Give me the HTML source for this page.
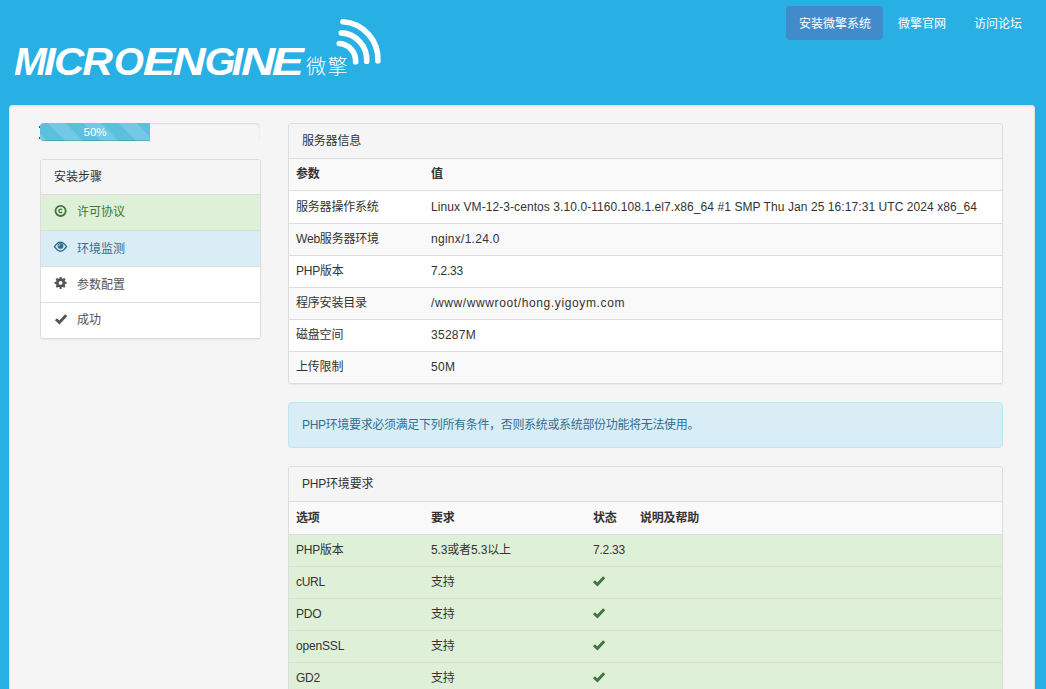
<!DOCTYPE html>
<html lang="zh-cn">
<head>
<meta charset="utf-8">
<title>安装系统 - 微擎 - 公众平台自助开源引擎</title>
<style>
*{box-sizing:border-box;}
html,body{margin:0;padding:0;}
body{width:1046px;height:689px;overflow:hidden;background:#28b0e4;color:#333;
  font-family:"Liberation Sans","Noto Sans CJK SC",sans-serif;font-size:12px;line-height:20px;position:relative;}
a{text-decoration:none;color:inherit;}
ul{list-style:none;margin:0;padding:0;}

/* header */
.header{position:absolute;left:0;top:0;width:1046px;height:105px;}
.logo{position:absolute;left:0;top:0;width:400px;height:105px;}
.nav li{position:absolute;top:6px;height:34px;}
.nav a{display:block;height:34px;line-height:36px;padding:0 13px;color:#fff;border-radius:4px;font-size:12px;white-space:nowrap;}
.nav li.active a{background:#428bca;width:97px;}

/* well */
.well{position:absolute;left:9px;top:105px;width:1026px;height:620px;background:#f5f5f5;border:1px solid #e3e3e3;border-radius:3px;box-shadow:inset 0 1px 1px rgba(0,0,0,.05);}

/* sidebar */
.progress{position:absolute;left:40px;top:123px;width:220px;height:18px;background:#f5f5f5;border-radius:4px;
  box-shadow:inset 0 1px 2px rgba(0,0,0,.1);overflow:hidden;}
.progress-bar{width:110px;height:18px;background-color:#5bc0de;color:#fff;text-align:center;font-size:11.5px;line-height:18px;
  background-image:linear-gradient(45deg,rgba(255,255,255,.15) 25%,transparent 25%,transparent 50%,rgba(255,255,255,.15) 50%,rgba(255,255,255,.15) 75%,transparent 75%,transparent);
  background-size:35.5px 35.5px;background-position:8px 0;box-shadow:inset 0 -1px 0 rgba(0,0,0,.15);}
.dot{position:absolute;left:38.8px;width:1.4px;height:2.2px;background:#333;border-radius:.5px;}
.panel{position:absolute;background:#fff;border:1px solid #ddd;border-radius:3px;box-shadow:0 1px 1px rgba(0,0,0,.05);overflow:hidden;}
.panel-heading{background:#f5f5f5;border-bottom:1px solid #ddd;padding:0 13px;color:#333;}
.side{left:40px;top:159px;width:221px;}
.side .panel-heading{height:35px;line-height:34px;}
.side li{height:36px;line-height:34px;border-top:1px solid #ddd;padding-left:13px;background:#fff;color:#555;position:relative;}
.side li:first-child{border-top:0;height:35px;line-height:35px;}
.side li:nth-child(2),.side li:nth-child(3){line-height:36px;}
.side li.ok{background:#dff0d8;color:#3c763d;}
.side li.cur{background:#d9edf7;color:#31708f;}
.side li svg{position:absolute;left:13px;top:10px;width:14px;height:14px;overflow:visible;}
.side li span{position:absolute;left:36px;top:0;}

/* main */
.main{left:288px;width:715px;}
.main .panel-heading{height:35px;line-height:34px;}
table{border-collapse:separate;border-spacing:0;width:100%;table-layout:fixed;}
th,td{text-align:left;padding:0 7px;height:32px;line-height:20px;border-top:1px solid #ddd;font-size:12px;vertical-align:top;padding-top:5px;white-space:nowrap;}
th{font-weight:bold;color:#333;}
thead tr{background:#f9f9f9;}
.main td,.main th,.main .panel-heading{letter-spacing:-0.2px;}
thead th{border-top:0;height:31px;padding-top:5px;}
tbody tr.h33 td{height:33px;padding-top:6px;}
thead.t32 th{height:32px;padding-top:6px;}
.striped tbody tr:nth-child(odd){background:#fff;}
.striped tbody tr:nth-child(even){background:#f9f9f9;}
tr.success td{background:#dff0d8;}
.alert{position:absolute;left:288px;top:402px;width:715px;height:46px;background:#d9edf7;border:1px solid #bce8f1;border-radius:4px;color:#31708f;padding:0 13px;line-height:44px;letter-spacing:-0.33px;}
.chk{width:14px;height:12px;display:block;position:relative;left:-1px;top:3px;}
</style>
</head>
<body>

<div class="header">
  <svg class="logo" viewBox="0 0 400 105">
    <text id="lg" y="75" font-family="Liberation Sans, sans-serif" font-size="39" font-weight="bold" font-style="italic" fill="#fff"><tspan x="13.9" textLength="32.8" lengthAdjust="spacingAndGlyphs">M</tspan><tspan x="44.1" textLength="11.8" lengthAdjust="spacingAndGlyphs">I</tspan><tspan x="54.0" textLength="30.2" lengthAdjust="spacingAndGlyphs">C</tspan><tspan x="82.3" textLength="30.7" lengthAdjust="spacingAndGlyphs">R</tspan><tspan x="113.7" textLength="30.2" lengthAdjust="spacingAndGlyphs">O</tspan><tspan x="142.8" textLength="32.6" lengthAdjust="spacingAndGlyphs">E</tspan><tspan x="172.5" textLength="33.2" lengthAdjust="spacingAndGlyphs">N</tspan><tspan x="204.5" textLength="31.0" lengthAdjust="spacingAndGlyphs">G</tspan><tspan x="231.8" textLength="11.4" lengthAdjust="spacingAndGlyphs">I</tspan><tspan x="240.9" textLength="34.3" lengthAdjust="spacingAndGlyphs">N</tspan><tspan x="271.7" textLength="32.1" lengthAdjust="spacingAndGlyphs">E</tspan></text>
    <text x="306" y="73.6" font-family="Noto Sans CJK SC, sans-serif" font-weight="300" font-size="20" fill="#fff" letter-spacing="1.5">微擎</text>
    <g fill="none" stroke="#fff" stroke-width="5.6" stroke-linecap="round">
      <path d="M342.9 21.7A37.5 37.5 0 0 1 377.9 60.8"/>
      <path d="M341.3 32.9A26.9 26.9 0 0 1 366.7 61.3"/>
      <path d="M339.3 43.5A17.3 17.3 0 0 1 355.6 61.8"/>
    </g>
  </svg>
  <ul class="nav">
    <li class="active" style="left:786px"><a href="#">安装微擎系统</a></li>
    <li style="left:885px"><a href="#">微擎官网</a></li>
    <li style="left:961px"><a href="#">访问论坛</a></li>
  </ul>
</div>

<div class="well"></div>

<div class="progress"><div class="progress-bar">50%</div></div>
<i class="dot" style="top:125.5px"></i><i class="dot" style="top:137px"></i>

<div class="panel side">
  <div class="panel-heading">安装步骤</div>
  <ul>
    <li class="ok"><svg viewBox="0 0 14 14"><circle cx="6.6" cy="5.9" r="5.1" fill="none" stroke="#3c763d" stroke-width="1.8"/><path d="M8.1 4.8A1.8 1.8 0 1 0 8.1 7" fill="none" stroke="#3c763d" stroke-width="1.3"/></svg><span>许可协议</span></li>
    <li class="cur"><svg viewBox="0 0 14 14"><path d="M0.5 5.7C2.6 2.4 4.6 1.2 6.5 1.2C8.4 1.2 10.4 2.4 12.5 5.7C10.4 9 8.4 10.2 6.5 10.2C4.6 10.2 2.6 9 0.5 5.7Z" fill="none" stroke="#31708f" stroke-width="1.4" stroke-linejoin="round"/><circle cx="6.5" cy="4.9" r="2.9" fill="#31708f"/><path d="M4.9 5A1.7 1.7 0 0 1 6.4 3.3" fill="none" stroke="#d9edf7" stroke-width="0.9"/></svg><span>环境监测</span></li>
    <li><svg viewBox="0 0 14 14"><g fill="#555"><rect x="2.4" y="1.7" width="8.4" height="8.4" rx="2.2"/><circle cx="6.6" cy="5.9" r="4.3"/><g><rect x="5.5" y="-0.1" width="2.2" height="12" rx="0.3"/><rect x="5.5" y="-0.1" width="2.2" height="12" rx="0.3" transform="rotate(45 6.6 5.9)"/><rect x="5.5" y="-0.1" width="2.2" height="12" rx="0.3" transform="rotate(90 6.6 5.9)"/><rect x="5.5" y="-0.1" width="2.2" height="12" rx="0.3" transform="rotate(135 6.6 5.9)"/></g></g><circle cx="6.6" cy="5.9" r="1.9" fill="#fff"/></svg><span>参数配置</span></li>
    <li><svg viewBox="0 0 14 14"><path d="M1.9 6.2L5.4 9.5L12.2 2.2" fill="none" stroke="#555" stroke-width="2.9"/></svg><span>成功</span></li>
  </ul>
</div>

<div class="panel main" style="top:123px;">
  <div class="panel-heading">服务器信息</div>
  <table class="striped">
    <colgroup><col style="width:135px"><col></colgroup>
    <thead><tr><th>参数</th><th>值</th></tr></thead>
    <tbody>
      <tr class="h33"><td>服务器操作系统</td><td style="letter-spacing:0.077px">Linux VM-12-3-centos 3.10.0-1160.108.1.el7.x86_64 #1 SMP Thu Jan 25 16:17:31 UTC 2024 x86_64</td></tr>
      <tr><td>Web服务器环境</td><td style="letter-spacing:0.275px">nginx/1.24.0</td></tr>
      <tr><td>PHP版本</td><td style="letter-spacing:-0.23px">7.2.33</td></tr>
      <tr><td>程序安装目录</td><td style="letter-spacing:0.62px">/www/wwwroot/hong.yigoym.com</td></tr>
      <tr><td>磁盘空间</td><td style="letter-spacing:0.27px">35287M</td></tr>
      <tr><td>上传限制</td><td style="letter-spacing:0.33px">50M</td></tr>
    </tbody>
  </table>
</div>

<div class="alert">PHP环境要求必须满足下列所有条件，否则系统或系统部份功能将无法使用。</div>

<div class="panel main" style="top:466px;">
  <div class="panel-heading">PHP环境要求</div>
  <table>
    <colgroup><col style="width:135px"><col style="width:162px"><col style="width:47px"><col></colgroup>
    <thead class="t32"><tr><th>选项</th><th>要求</th><th>状态</th><th>说明及帮助</th></tr></thead>
    <tbody>
      <tr class="success"><td>PHP版本</td><td style="letter-spacing:-0.15px">5.3或者5.3以上</td><td style="letter-spacing:-0.23px">7.2.33</td><td></td></tr>
      <tr class="success"><td style="letter-spacing:-0.3px">cURL</td><td>支持</td><td><svg class="chk" viewBox="0 0 14 12"><path d="M1.9 6.2L5.4 9.5L12.2 2.2" fill="none" stroke="#3c763d" stroke-width="2.9"/></svg></td><td></td></tr>
      <tr class="success"><td style="letter-spacing:-0.2px">PDO</td><td>支持</td><td><svg class="chk" viewBox="0 0 14 12"><path d="M1.9 6.2L5.4 9.5L12.2 2.2" fill="none" stroke="#3c763d" stroke-width="2.9"/></svg></td><td></td></tr>
      <tr class="success"><td style="letter-spacing:-0.17px">openSSL</td><td>支持</td><td><svg class="chk" viewBox="0 0 14 12"><path d="M1.9 6.2L5.4 9.5L12.2 2.2" fill="none" stroke="#3c763d" stroke-width="2.9"/></svg></td><td></td></tr>
      <tr class="success"><td style="letter-spacing:-0.25px">GD2</td><td>支持</td><td><svg class="chk" viewBox="0 0 14 12"><path d="M1.9 6.2L5.4 9.5L12.2 2.2" fill="none" stroke="#3c763d" stroke-width="2.9"/></svg></td><td></td></tr>
      <tr class="success"><td>DOM</td><td>支持</td><td><svg class="chk" viewBox="0 0 14 12"><path d="M1.9 6.2L5.4 9.5L12.2 2.2" fill="none" stroke="#3c763d" stroke-width="2.9"/></svg></td><td></td></tr>
    </tbody>
  </table>
</div>

</body>
</html>
